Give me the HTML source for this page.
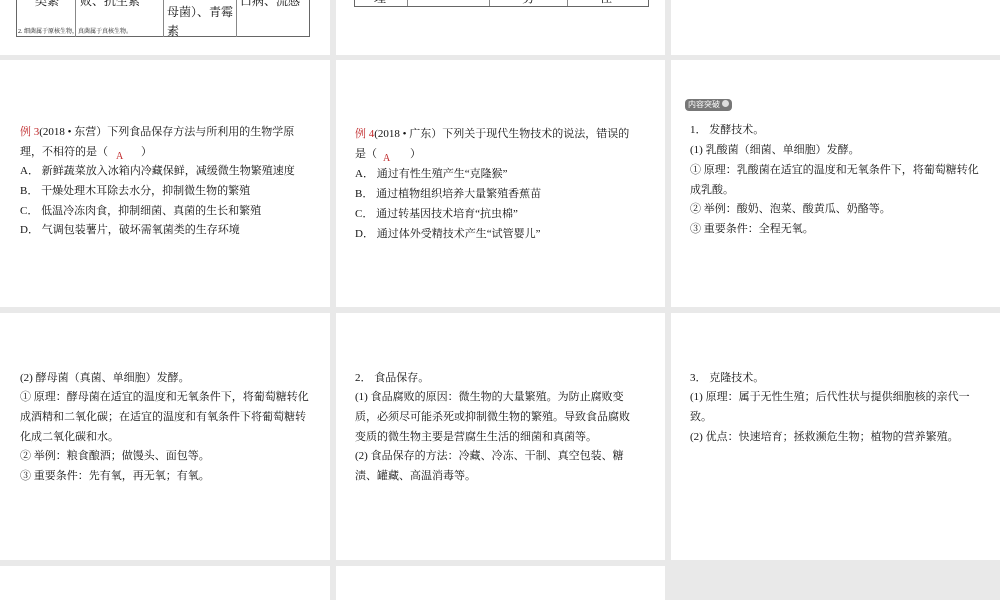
<!DOCTYPE html>
<html><head><meta charset="utf-8"><style>
body{margin:0;width:1000px;height:600px;background:#e9e9e9;position:relative;overflow:hidden;font-family:"Liberation Serif","Noto Serif CJK SC",serif;color:#111}
.p{position:absolute;background:#fff}
.t{position:absolute;font-size:11px;white-space:nowrap;line-height:14px}
.r{color:#c0282a}
.b{position:absolute;border:1px solid #666}
.v{position:absolute;width:1px;background:#888}
</style></head><body>
<div class="p" style="left:0;top:0;width:330px;height:55px"></div>
<div class="p" style="left:336px;top:0;width:329px;height:55px"></div>
<div class="p" style="left:671px;top:0;width:329px;height:55px"></div>
<div class="p" style="left:0;top:60px;width:330px;height:247px"></div>
<div class="p" style="left:336px;top:60px;width:329px;height:247px"></div>
<div class="p" style="left:671px;top:60px;width:329px;height:247px"></div>
<div class="p" style="left:0;top:313px;width:330px;height:247px"></div>
<div class="p" style="left:336px;top:313px;width:329px;height:247px"></div>
<div class="p" style="left:671px;top:313px;width:329px;height:247px"></div>
<div class="p" style="left:0;top:566px;width:330px;height:34px"></div>
<div class="p" style="left:336px;top:566px;width:329px;height:34px"></div>

<div class="b" style="left:16px;top:-2px;width:292px;height:38px;border-top:none"></div>
<div class="v" style="left:75px;top:0;height:37px"></div>
<div class="v" style="left:163px;top:0;height:37px"></div>
<div class="v" style="left:236px;top:0;height:37px"></div>
<div class="t" style="left:35px;top:-6px;font-size:12px">类繁</div>
<div class="t" style="left:80px;top:-6px;font-size:12px">败、抗生素</div>
<div class="t" style="left:167px;top:5px;font-size:12px">母菌）、青霉</div>
<div class="t" style="left:167px;top:24px;font-size:12px">素</div>
<div class="t" style="left:240px;top:-6px;font-size:12px">口病、流感</div>
<div class="t" style="left:18px;top:28px;font-size:6px;line-height:8px">2. 细菌属于原核生物，真菌属于真核生物。</div>

<div class="b" style="left:354px;top:-2px;width:293px;height:8px;border-top:none"></div>
<div class="v" style="left:407px;top:0;height:6px"></div>
<div class="v" style="left:489px;top:0;height:6px"></div>
<div class="v" style="left:567px;top:0;height:6px"></div>
<div class="t" style="left:374px;top:-9px;font-size:12px">理</div>
<div class="t" style="left:522px;top:-9px;font-size:12px">剪</div>
<div class="t" style="left:600px;top:-9px;font-size:12px">住</div>

<div class="t" style="left:20px;top:125px"><span class="r">例 3</span>(2018 • 东营）下列食品保存方法与所利用的生物学原</div>
<div class="t" style="left:20px;top:145px">理，不相符的是（　　　）</div>
<div class="t r" style="left:116px;top:150px;font-size:10px">A</div>
<div class="t" style="left:20px;top:164px">A． 新鲜蔬菜放入冰箱内冷藏保鲜，减缓微生物繁殖速度</div>
<div class="t" style="left:20px;top:184px">B． 干燥处理木耳除去水分，抑制微生物的繁殖</div>
<div class="t" style="left:20px;top:204px">C． 低温冷冻肉食，抑制细菌、真菌的生长和繁殖</div>
<div class="t" style="left:20px;top:223px">D． 气调包装薯片，破坏需氧菌类的生存环境</div>

<div class="t" style="left:355px;top:127px"><span class="r">例 4</span>(2018 • 广东）下列关于现代生物技术的说法，错误的</div>
<div class="t" style="left:355px;top:147px">是（　　　）</div>
<div class="t r" style="left:383px;top:152px;font-size:10px">A</div>
<div class="t" style="left:355px;top:167px">A． 通过有性生殖产生“克隆猴”</div>
<div class="t" style="left:355px;top:187px">B． 通过植物组织培养大量繁殖香蕉苗</div>
<div class="t" style="left:355px;top:207px">C． 通过转基因技术培育“抗虫棉”</div>
<div class="t" style="left:355px;top:227px">D． 通过体外受精技术产生“试管婴儿”</div>

<div style="position:absolute;left:685px;top:99px;width:44px;height:12px;background:#777;border-radius:4px;color:#fff;font-size:8px;line-height:12px;padding-left:3px;font-family:'Liberation Sans','Noto Sans CJK SC',sans-serif">内容突破 <span style="display:inline-block;width:7px;height:7px;border-radius:50%;background:#ddd"></span></div>
<div class="t" style="left:690px;top:123px">1． 发酵技术。</div>
<div class="t" style="left:690px;top:143px">(1) 乳酸菌（细菌、单细胞）发酵。</div>
<div class="t" style="left:690px;top:163px">① 原理：乳酸菌在适宜的温度和无氧条件下，将葡萄糖转化</div>
<div class="t" style="left:690px;top:183px">成乳酸。</div>
<div class="t" style="left:690px;top:202px">② 举例：酸奶、泡菜、酸黄瓜、奶酪等。</div>
<div class="t" style="left:690px;top:222px">③ 重要条件：全程无氧。</div>

<div class="t" style="left:20px;top:371px">(2) 酵母菌（真菌、单细胞）发酵。</div>
<div class="t" style="left:20px;top:390px">① 原理：酵母菌在适宜的温度和无氧条件下，将葡萄糖转化</div>
<div class="t" style="left:20px;top:410px">成酒精和二氧化碳；在适宜的温度和有氧条件下将葡萄糖转</div>
<div class="t" style="left:20px;top:430px">化成二氧化碳和水。</div>
<div class="t" style="left:20px;top:449px">② 举例：粮食酿酒；做馒头、面包等。</div>
<div class="t" style="left:20px;top:469px">③ 重要条件：先有氧，再无氧；有氧。</div>

<div class="t" style="left:355px;top:371px">2． 食品保存。</div>
<div class="t" style="left:355px;top:390px">(1) 食品腐败的原因：微生物的大量繁殖。为防止腐败变</div>
<div class="t" style="left:355px;top:410px">质，必须尽可能杀死或抑制微生物的繁殖。导致食品腐败</div>
<div class="t" style="left:355px;top:430px">变质的微生物主要是营腐生生活的细菌和真菌等。</div>
<div class="t" style="left:355px;top:449px">(2) 食品保存的方法：冷藏、冷冻、干制、真空包装、糖</div>
<div class="t" style="left:355px;top:469px">渍、罐藏、高温消毒等。</div>

<div class="t" style="left:690px;top:371px">3． 克隆技术。</div>
<div class="t" style="left:690px;top:390px">(1) 原理：属于无性生殖；后代性状与提供细胞核的亲代一</div>
<div class="t" style="left:690px;top:410px">致。</div>
<div class="t" style="left:690px;top:430px">(2) 优点：快速培育；拯救濒危生物；植物的营养繁殖。</div>
</body></html>
